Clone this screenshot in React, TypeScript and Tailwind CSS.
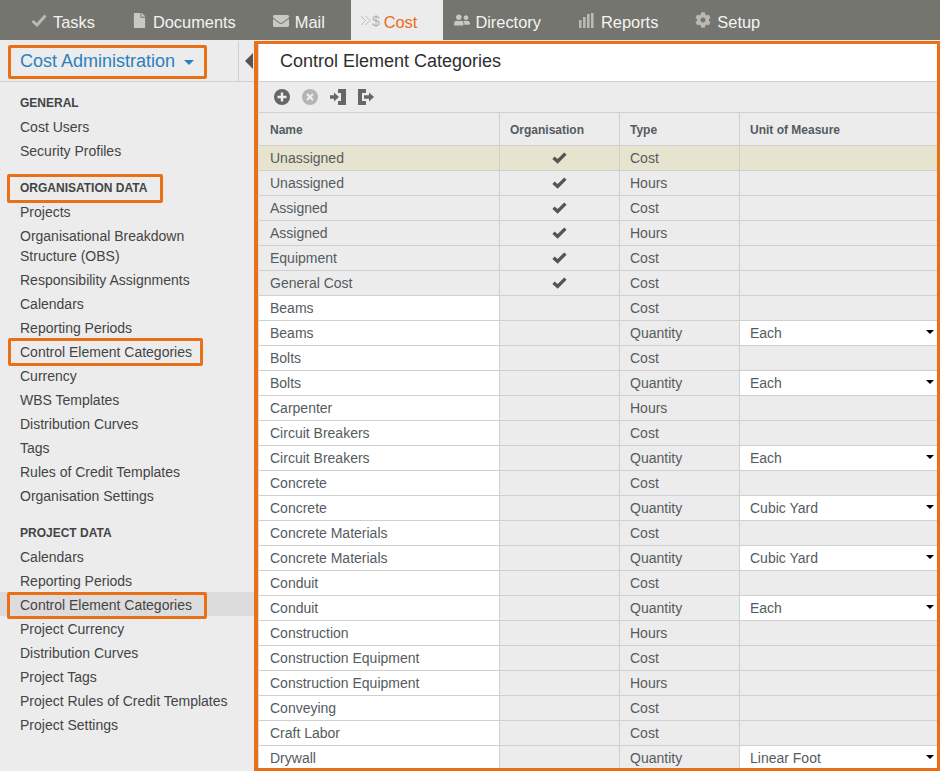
import React from "react";
import { FaCog, FaFile, FaEnvelope, FaUserFriends } from "react-icons/fa";

const O = "border-[3px] border-[#ea7018] rounded-[2px]";

function Nav({ label, ml, icon, active }: { label: string; ml: string; icon: React.ReactNode; active?: boolean }) {
  return (
    <div className={`flex h-10 items-center ${ml} ${active ? "bg-[#ececec] pl-[9px] pr-[26px]" : ""}`}>
      {icon}
      <span className={`mt-[5px] text-[16.4px] ${active ? "text-[#ea6a1f]" : "text-[#f4f4f2]"}`}>{label}</span>
    </div>
  );
}

function SideItem({ label, two, active, box }: { label: string; two?: boolean; active?: boolean; box?: string }) {
  return (
    <div
      className={`flex items-center pl-5 text-[14px] leading-[20px] text-[#444] ${two ? "h-[44px]" : "h-6"} ${
        active ? "-mt-px mb-px bg-[#dcdcdc] pt-[2px]" : ""
      }`}
    >
      {box ? (
        <span className={`${O} ${box} flex items-center whitespace-nowrap`}>{label}</span>
      ) : two ? (
        <span className="w-[190px]">{label}</span>
      ) : (
        <span className="whitespace-nowrap">{label}</span>
      )}
    </div>
  );
}

function SideHead({ label, cls }: { label: string; cls: string }) {
  return <div className={`pl-5 text-[12px] font-bold leading-[24px] text-[#444] ${cls}`}>{label}</div>;
}

type Row = [string, string, string?];

const orgRows: Row[] = [
  ["Unassigned", "Cost"],
  ["Unassigned", "Hours"],
  ["Assigned", "Cost"],
  ["Assigned", "Hours"],
  ["Equipment", "Cost"],
  ["General Cost", "Cost"],
];
const rows: Row[] = [
  ["Beams", "Cost"],
  ["Beams", "Quantity", "Each"],
  ["Bolts", "Cost"],
  ["Bolts", "Quantity", "Each"],
  ["Carpenter", "Hours"],
  ["Circuit Breakers", "Cost"],
  ["Circuit Breakers", "Quantity", "Each"],
  ["Concrete", "Cost"],
  ["Concrete", "Quantity", "Cubic Yard"],
  ["Concrete Materials", "Cost"],
  ["Concrete Materials", "Quantity", "Cubic Yard"],
  ["Conduit", "Cost"],
  ["Conduit", "Quantity", "Each"],
  ["Construction", "Hours"],
  ["Construction Equipment", "Cost"],
  ["Construction Equipment", "Hours"],
  ["Conveying", "Cost"],
  ["Craft Labor", "Cost"],
  ["Drywall", "Quantity", "Linear Foot"],
];

function TableRow({ r, org, first }: { r: Row; org?: boolean; first?: boolean }) {
  return (
    <div className={`grid h-[25px] shrink-0 grid-cols-[241px_120px_120px_1fr] border-b border-[#cfcfcf] text-[14px] text-[#555b60] ${first ? "bg-[#e6e3cf]" : ""}`}>
      <div className={`flex items-center border-r border-[#cfcfcf] pl-[11px] ${org ? "" : "bg-white"}`}>{r[0]}</div>
      <div className="flex items-center justify-center border-r border-[#cfcfcf]">
        {org && (
          <svg width="15" height="12" viewBox="0 0 15 12">
            <path d="M1.5 5.8 L5.6 9.4 L13.4 1.6" fill="none" stroke="#555" strokeWidth="3.4" />
          </svg>
        )}
      </div>
      <div className="flex items-center border-r border-[#cfcfcf] pl-[10px]">{r[1]}</div>
      <div className={`flex items-center justify-between pl-[10px] pr-[3px] ${r[2] ? "bg-white" : ""}`}>
        <span>{r[2]}</span>
        {r[2] && <span className="mb-[3px] h-0 w-0 border-x-[4px] border-t-[4px] border-x-transparent border-t-black" />}
      </div>
    </div>
  );
}

export default function App() {
  return (
    <div className="flex h-[771px] w-[940px] flex-col overflow-hidden bg-[#ececec] font-['Liberation_Sans',Arial,sans-serif]">
      <header className="flex h-10 shrink-0 bg-[#75756f]">
        <Nav
          label="Tasks"
          ml="ml-[31px]"
          icon={
            <svg width="16" height="13" viewBox="0 0 16 13" className="mr-[6px]">
              <path d="M1.5 7 L6 11 L14.5 1.5" fill="none" stroke="#b9b9b5" strokeWidth="3" />
            </svg>
          }
        />
        <Nav label="Documents" ml="ml-[37px]" icon={<FaFile className="mr-[6px] text-[15px] text-[#c8c8c4]" />} />
        <Nav label="Mail" ml="ml-[37px]" icon={<FaEnvelope className="mr-[6px] mt-[2px] text-[16px] text-[#c8c8c4]" />} />
        <Nav
          label="Cost"
          ml="ml-[26px]"
          active
          icon={
            <span className="mr-[4px] mt-px flex items-center text-[14px] leading-none text-[#b0b0b0]">
              <svg width="12" height="11" viewBox="0 0 12 11">
                <path d="M1 1 L5.5 5.5 L1 10 M5.5 1 L10 5.5 L5.5 10" fill="none" stroke="#bdbdbd" strokeWidth="1" />
              </svg>
              $
            </span>
          }
        />
        <Nav label="Directory" ml="ml-[11px]" icon={<FaUserFriends className="mr-[5px] text-[16px] text-[#c8c8c4]" />} />
        <Nav
          label="Reports"
          ml="ml-[38px]"
          icon={
            <svg width="15" height="15" viewBox="0 0 15 15" className="mr-[7px]" fill="#b9b9b5">
              <rect x="0" y="7" width="2.6" height="8" />
              <rect x="4" y="4" width="2.6" height="11" />
              <rect x="8" y="1" width="2.6" height="14" />
              <rect x="12" y="0" width="2.6" height="15" />
            </svg>
          }
        />
        <Nav label="Setup" ml="ml-[37px]" icon={<FaCog className="mr-[6px] text-[16px] text-[#b9b9b5]" />} />
      </header>

      <div className="mt-px flex min-h-0 flex-1 bg-[#ececec]">
        <aside className="w-[254px] shrink-0">
          <div className="flex h-[41px] border-b border-[#cfcfcf]">
            <div className="flex w-[239px] items-center border-r border-[#cfcfcf] pl-2 pt-px">
              <div className={`${O} flex h-[34px] w-[199px] items-center pl-[9px] text-[18px] text-[#2b80c0]`}>
                Cost Administration
                <span className="ml-[9px] mt-px h-0 w-0 border-x-[5px] border-t-[5px] border-x-transparent border-t-[#2b80c0]" />
              </div>
            </div>
            <div className="flex flex-1 items-center pl-[6px]">
              <span className="h-0 w-0 border-y-[8px] border-r-[8px] border-y-transparent border-r-[#555]" />
            </div>
          </div>

          <SideHead label="GENERAL" cls="mt-[9px]" />
          <SideItem label="Cost Users" />
          <SideItem label="Security Profiles" />

          <div className="mt-[13px] flex h-6 items-center pl-5">
            <span className={`${O} -ml-[13px] flex h-[29px] w-[156px] items-center pl-[10px] text-[12px] font-bold text-[#444]`}>
              ORGANISATION DATA
            </span>
          </div>
          <SideItem label="Projects" />
          <SideItem label="Organisational Breakdown Structure (OBS)" two />
          <SideItem label="Responsibility Assignments" />
          <SideItem label="Calendars" />
          <SideItem label="Reporting Periods" />
          <SideItem label="Control Element Categories" box="-ml-[12px] h-[28px] w-[195px] pl-[9px]" />
          <SideItem label="Currency" />
          <SideItem label="WBS Templates" />
          <SideItem label="Distribution Curves" />
          <SideItem label="Tags" />
          <SideItem label="Rules of Credit Templates" />
          <SideItem label="Organisation Settings" />

          <SideHead label="PROJECT DATA" cls="mt-[13px]" />
          <SideItem label="Calendars" />
          <SideItem label="Reporting Periods" />
          <SideItem label="Control Element Categories" active box="-ml-[13px] h-[27px] w-[200px] pl-[10px]" />
          <SideItem label="Project Currency" />
          <SideItem label="Distribution Curves" />
          <SideItem label="Project Tags" />
          <SideItem label="Project Rules of Credit Templates" />
          <SideItem label="Project Settings" />
        </aside>

        <main className="flex min-w-0 flex-1 flex-col overflow-hidden border-[3px] border-l-[4px] border-[#ea7018]">
          <div className="flex min-h-0 flex-1 flex-col overflow-hidden border-l border-[#dcdcdc]">
            <div className="-ml-px flex h-[38px] shrink-0 items-center border-b border-[#cfcfcf] bg-white pb-[2px] pl-[22px] text-[18px] text-[#2e2e2e]">
              Control Element Categories
            </div>
            <div className="flex h-[31px] shrink-0 items-center gap-[12px] border-b border-[#cfcfcf] pl-[15px]">
              <svg width="16" height="16" viewBox="0 0 16 16">
                <circle cx="8" cy="8" r="8" fill="#666" />
                <path d="M8 3.5 V12.5 M3.5 8 H12.5" stroke="#eee" strokeWidth="2.4" />
              </svg>
              <svg width="16" height="16" viewBox="0 0 16 16">
                <circle cx="8" cy="8" r="8" fill="#b4b4b4" />
                <path d="M5 5 L11 11 M11 5 L5 11" stroke="#eee" strokeWidth="2.2" />
              </svg>
              <svg width="16" height="16" viewBox="0 0 16 16" fill="#666">
                <path d="M8 0 H16 V16 H8 V12 H11 V4 H8 Z" />
                <path d="M0 6.2 H4 V3.5 L9 8 L4 12.5 V9.8 H0 Z" />
              </svg>
              <svg width="16" height="16" viewBox="0 0 16 16" fill="#666">
                <path d="M0 0 H8 V4 H4 V12 H8 V16 H0 Z" />
                <path d="M6 6.2 H11 V3.5 L16 8 L11 12.5 V9.8 H6 Z" />
              </svg>
            </div>
            <div className="grid h-[33px] shrink-0 grid-cols-[241px_120px_120px_1fr] border-b border-[#cfcfcf] text-[12px] font-bold text-[#555b60]">
              <div className="flex items-center border-r border-[#cfcfcf] pl-[11px] pt-[2px]">Name</div>
              <div className="flex items-center border-r border-[#cfcfcf] pl-[10px] pt-[2px]">Organisation</div>
              <div className="flex items-center border-r border-[#cfcfcf] pl-[10px] pt-[2px]">Type</div>
              <div className="flex items-center pl-[10px] pt-[2px]">Unit of Measure</div>
            </div>
            {orgRows.map((r, i) => (
              <TableRow key={i} r={r} org first={i === 0} />
            ))}
            {rows.map((r, i) => (
              <TableRow key={i} r={r} />
            ))}
          </div>
        </main>
      </div>
    </div>
  );
}
